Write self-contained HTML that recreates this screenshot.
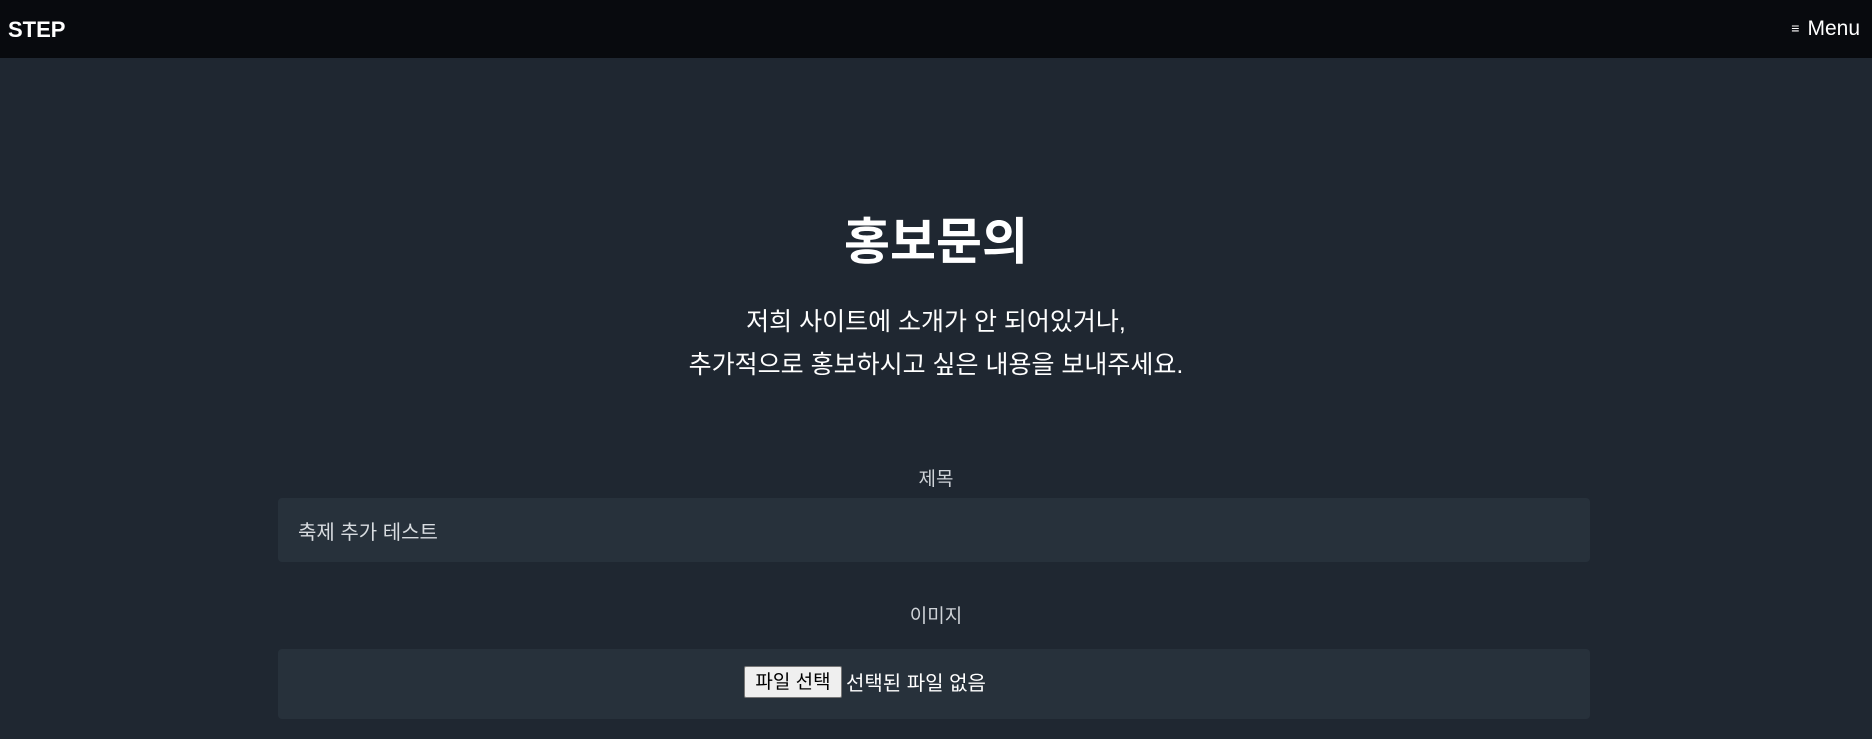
<!DOCTYPE html>
<html><head><meta charset="utf-8"><style>
*{margin:0;padding:0;box-sizing:border-box}
body{width:1872px;height:739px;overflow:hidden;background:#1f2731;font-family:"Liberation Sans","Noto Sans CJK KR",sans-serif;color:#fff;position:relative}
.hdr{position:absolute;left:0;top:0;width:1872px;height:58px;background:#080a0e}
.logo{position:absolute;left:8px;top:17px;font-size:22px;font-weight:bold}
.menu{position:absolute;right:12px;top:17px;font-size:21px}
.menu span{font-size:14px;margin-right:8px;position:relative;top:-2px}
.t{position:absolute;left:0;width:1872px;text-align:center}
.box{position:absolute;left:278px;width:1312px;background:#27313b;border-radius:4px}
.lbl{font-size:19px;color:#cfd3d8}
</style></head><body>
<div class="hdr"><div class="logo">STEP</div><div class="menu"><span>≡</span>Menu</div></div>
<div class="t" style="top:209px;font-size:50px;font-weight:bold;line-height:66px">홍보문의</div>
<div class="t" style="top:301px;font-size:25px;line-height:43px">저희 사이트에 소개가 안 되어있거나,<br>추가적으로 홍보하시고 싶은 내용을 보내주세요.</div>
<div class="t lbl" style="top:467px;line-height:26px">제목</div>
<div class="box" style="top:498px;height:64px"><div style="position:absolute;left:20px;top:18px;font-size:20px;color:#d8dce0">축제 추가 테스트</div></div>
<div class="t lbl" style="top:604px;line-height:26px">이미지</div>
<div class="box" style="top:649px;height:70px">
<div style="position:absolute;left:466px;top:17px;width:98px;height:32px;background:#efefef;border:1px solid #767676;border-radius:2px;color:#000;font-size:19px;line-height:32px;text-align:center">파일 선택</div>
<div style="position:absolute;left:568px;top:19px;font-size:20px;line-height:32px;color:#fff">선택된 파일 없음</div>
</div>
</body></html>
